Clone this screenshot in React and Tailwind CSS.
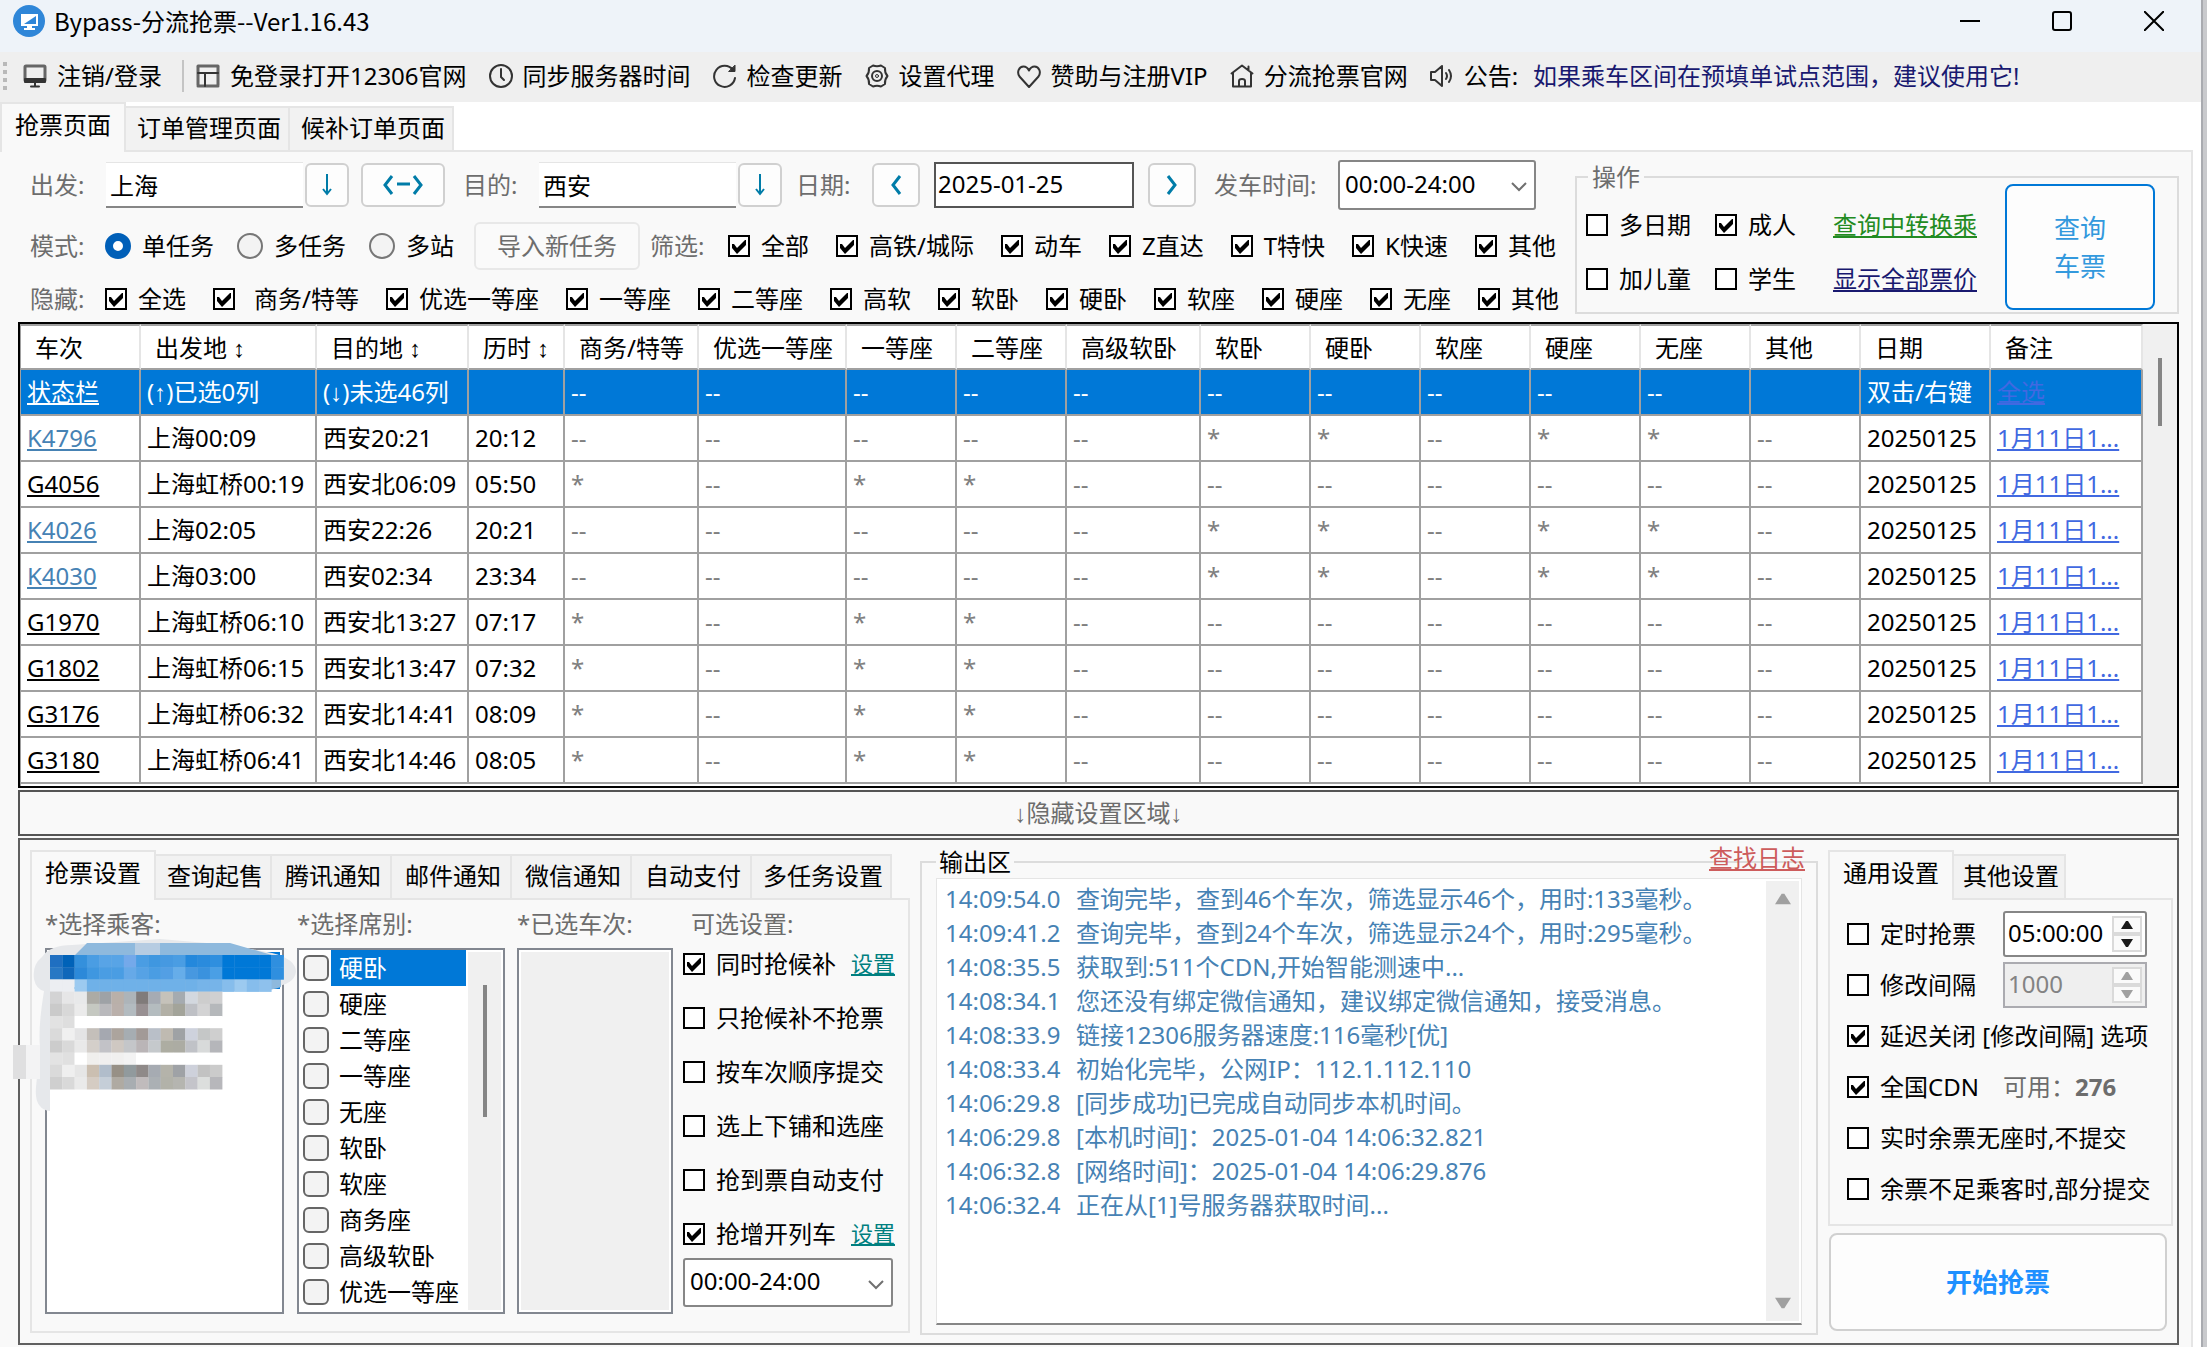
import React, { useState } from "react";

const ticketTabs = [
  { name: "抢票页面", width: "w-[126px]" },
  { name: "订单管理页面", width: "w-[164px]" },
  { name: "候补订单页面", width: "w-[164px]" },
];

const settingTabs = [
  { name: "抢票设置", width: "w-[126px]" },
  { name: "查询起售", width: "w-[116px]" },
  { name: "腾讯通知", width: "w-[120px]" },
  { name: "邮件通知", width: "w-[120px]" },
  { name: "微信通知", width: "w-[120px]" },
  { name: "自动支付", width: "w-[120px]" },
  { name: "多任务设置", width: "w-[140px]" },
];

const commonTabs = [
  { name: "通用设置", width: "w-[126px]" },
  { name: "其他设置", width: "w-[112px]" },
];

const trainFilters = ["全部", "高铁/城际", "动车", "Z直达", "T特快", "K快速", "其他"];
const hideFilters = [
  "全选",
  "商务/特等",
  "优选一等座",
  "一等座",
  "二等座",
  "高软",
  "软卧",
  "硬卧",
  "软座",
  "硬座",
  "无座",
  "其他",
];

const columns = [
  { name: "车次", width: "w-[120px]" },
  { name: "出发地 ↕", width: "w-[176px]" },
  { name: "目的地 ↕", width: "w-[152px]" },
  { name: "历时 ↕", width: "w-[96px]" },
  { name: "商务/特等", width: "w-[134px]" },
  { name: "优选一等座", width: "w-[148px]" },
  { name: "一等座", width: "w-[110px]" },
  { name: "二等座", width: "w-[110px]" },
  { name: "高级软卧", width: "w-[134px]" },
  { name: "软卧", width: "w-[110px]" },
  { name: "硬卧", width: "w-[110px]" },
  { name: "软座", width: "w-[110px]" },
  { name: "硬座", width: "w-[110px]" },
  { name: "无座", width: "w-[110px]" },
  { name: "其他", width: "w-[110px]" },
  { name: "日期", width: "w-[130px]" },
  { name: "备注", width: "w-[152px]" },
];

const kSeats = ["--", "--", "--", "--", "--", "*", "*", "--", "*", "*", "--"];
const gSeats = ["*", "--", "*", "*", "--", "--", "--", "--", "--", "--", "--"];

const trains = [
  ["K4796", "上海00:09", "西安20:21", "20:12"],
  ["G4056", "上海虹桥00:19", "西安北06:09", "05:50"],
  ["K4026", "上海02:05", "西安22:26", "20:21"],
  ["K4030", "上海03:00", "西安02:34", "23:34"],
  ["G1970", "上海虹桥06:10", "西安北13:27", "07:17"],
  ["G1802", "上海虹桥06:15", "西安北13:47", "07:32"],
  ["G3176", "上海虹桥06:32", "西安北14:41", "08:09"],
  ["G3180", "上海虹桥06:41", "西安北14:46", "08:05"],
];

const seats = ["硬卧", "硬座", "二等座", "一等座", "无座", "软卧", "软座", "商务座", "高级软卧", "优选一等座"];

const options = [
  { name: "同时抢候补", checked: true, link: "设置" },
  { name: "只抢候补不抢票" },
  { name: "按车次顺序提交" },
  { name: "选上下铺和选座" },
  { name: "抢到票自动支付" },
  { name: "抢增开列车", checked: true, link: "设置" },
];

const logs = [
  ["14:09:54.0", "查询完毕，查到46个车次，筛选显示46个，用时:133毫秒。"],
  ["14:09:41.2", "查询完毕，查到24个车次，筛选显示24个，用时:295毫秒。"],
  ["14:08:35.5", "获取到:511个CDN,开始智能测速中..."],
  ["14:08:34.1", "您还没有绑定微信通知，建议绑定微信通知，接受消息。"],
  ["14:08:33.9", "链接12306服务器速度:116毫秒[优]"],
  ["14:08:33.4", "初始化完毕，公网IP：112.1.112.110"],
  ["14:06:29.8", "[同步成功]已完成自动同步本机时间。"],
  ["14:06:29.8", "[本机时间]：2025-01-04 14:06:32.821"],
  ["14:06:32.8", "[网络时间]：2025-01-04 14:06:29.876"],
  ["14:06:32.4", "正在从[1]号服务器获取时间..."],
];

/* ---------- icons ---------- */

function ToolIcon({ children }) {
  return (
    <svg className="w-6 h-6 shrink-0" viewBox="0 0 24 24" fill="none" stroke="#333333" strokeWidth="2" strokeLinecap="round" strokeLinejoin="round">
      {children}
    </svg>
  );
}

const tools = [
  {
    name: "免登录打开12306官网",
    icon: (
      <>
        <path d="M2 2h20" stroke="#666666" strokeWidth="3" />
        <path d="M2 3v18M22 3v18M2 22h20" stroke="#666666" strokeWidth="3" />
        <path d="M2 9h20M9 9v13" />
      </>
    ),
  },
  {
    name: "同步服务器时间",
    icon: (
      <>
        <circle cx="12" cy="12" r="11" />
        <path d="M12 5v8l3 3" />
      </>
    ),
  },
  {
    name: "检查更新",
    icon: (
      <>
        <path d="M20 6A10.500 10.500 0 1 0 22 14" />
        <path d="M22 1.500v6h-6z" fill="#333333" strokeWidth="1" />
      </>
    ),
  },
  {
    name: "设置代理",
    icon: (
      <>
        <path d="M8 1.500Q12 3 16 1.500L20 4Q19.500 8.500 22.500 12Q19.500 15.500 20 20L16 22.500Q12 21 8 22.500L4 20Q4.500 15.500 1.500 12Q4.500 8.500 4 4Z" />
        <circle cx="12" cy="12" r="5" />
        <circle cx="12" cy="12" r="1.500" strokeWidth="1" />
      </>
    ),
  },
  {
    name: "赞助与注册VIP",
    icon: <path d="M12 23L2.500 12.500C-.5 8 2 2.500 6.500 2.500C9.500 2.500 11 4.500 12 6.500C13 4.500 14.500 2.500 17.500 2.500C22 2.500 24.500 8 21.500 12.500Z" />,
  },
  {
    name: "分流抢票官网",
    icon: (
      <>
        <path d="M1.500 9.500L12 1.500L22.500 9.500M18.500 2.500v4" />
        <path d="M3 9v13.500h18V9" />
        <path d="M9 22v-5q0-2 3-2t3 2v5" />
      </>
    ),
  },
];

function ArrowDown() {
  return (
    <svg className="w-4 h-6" viewBox="0 0 16 24" fill="none" stroke="#007ca8" strokeWidth="2">
      <path d="M8 1v20M4 16l4 5l4-5" />
    </svg>
  );
}

function Swap() {
  return (
    <svg className="w-10 h-5" viewBox="0 0 40 20" fill="none" stroke="#007ca8" strokeWidth="3">
      <path d="M9 1L2 10l7 9M14 9h13M31 1l7 9l-7 9" />
    </svg>
  );
}

function Angle({ right }) {
  return (
    <svg className="w-3 h-5" viewBox="0 0 12 20" fill="none" stroke="#007ca8" strokeWidth="3">
      <path d={right ? "M2 1l7 9l-7 9" : "M10 1L3 10l7 9"} />
    </svg>
  );
}

function Triangle({ up, color = "#1a1a1a", big }) {
  return (
    <svg className={big ? "w-4 h-3" : "w-3 h-2"} viewBox="0 0 12 8">
      <path d={up ? "M0 8L5 0h2l5 8z" : "M0 0l5 8h2l5-8z"} fill={color} />
    </svg>
  );
}

/* ---------- controls ---------- */

function Check({ label, checked, spaced }) {
  return (
    <label className="flex items-center gap-[11px] whitespace-nowrap">
      <span className="relative flex shrink-0">
        <input type="checkbox" defaultChecked={checked} className="peer appearance-none w-[22px] h-[22px] border-2 border-black bg-white" />
        <svg className="hidden peer-checked:block absolute inset-0 w-[22px] h-[22px] pointer-events-none" viewBox="0 0 22 22">
          <path d="M4 9v4l5 6l9-9V5h-1l-8 8l-3-4z" fill="#000000" />
        </svg>
      </span>
      <span className={spaced ? "pl-2" : ""}>{label}</span>
    </label>
  );
}

function Radio({ label, checked }) {
  return (
    <label className="flex items-center gap-[11px] whitespace-nowrap">
      <input
        type="radio"
        name="mode"
        defaultChecked={checked}
        className="appearance-none w-[26px] h-[26px] rounded-full border-2 border-[#777777] bg-[#f3f3f3] checked:border-[8px] checked:border-[#005fb8] checked:bg-white"
      />
      {label}
    </label>
  );
}

function TimeSelect({ label, className }) {
  return (
    <div className={`relative ${className}`}>
      <select aria-label={label} className="appearance-none w-full h-full pl-[5px] pb-[3px] border-2 border-[#868686] rounded-[3px] bg-white">
        <option>00:00-24:00</option>
      </select>
      <svg className="absolute right-[9px] top-1/2 -mt-1 w-4 h-3 pointer-events-none" viewBox="0 0 16 12" fill="none" stroke="#707070" strokeWidth="2">
        <path d="M1 2l7 7l7-7" />
      </svg>
    </div>
  );
}

function SquareButton({ width, label, children }) {
  return (
    <button type="button" aria-label={label} className={`flex items-center justify-center h-[44px] rounded-[6px] border-2 border-[#d0d0d0] bg-[#fdfdfd] ${width}`}>
      {children}
    </button>
  );
}

function Spinner({ label, value, disabled }) {
  const frame = disabled ? "border-[#ababb0] bg-[#efefef] text-[#838383]" : "border-[#868686] bg-white rounded-[3px]";
  const color = disabled ? "#a0a0a0" : "#1a1a1a";
  const half = "flex flex-1 items-center justify-center border-2 border-[#dadada] bg-[#fafafa]";
  return (
    <div className={`flex w-[144px] h-[46px] border-2 ${frame}`}>
      <input aria-label={label} defaultValue={value} disabled={disabled} className="min-w-0 flex-1 pl-[3px] pb-[2px] bg-transparent" />
      <div className="flex flex-col w-[30px] my-[3px] mr-[3px]">
        <button type="button" aria-label="增加" disabled={disabled} className={half}>
          <Triangle up color={color} />
        </button>
        <button type="button" aria-label="减少" disabled={disabled} className={half}>
          <Triangle color={color} />
        </button>
      </div>
    </div>
  );
}

function Tabs({ items, className = "" }) {
  const [active, setActive] = useState(0);
  return (
    <div role="tablist" className={`flex items-end h-[50px] border-b-2 border-[#e5e5e5] ${className}`}>
      {items.map((item, i) => (
        <button
          key={item.name}
          type="button"
          role="tab"
          aria-selected={i === active}
          onClick={() => setActive(i)}
          className={`${item.width} whitespace-nowrap border-[#e5e5e5] ${
            i === active ? "h-[50px] -mb-[2px] pb-[7px] border-t-2 border-x-2 bg-[#f9f9f9]" : "h-[44px] pl-[4px] pb-[2px] border-t-2 border-r-2 bg-[#f2f2f2]"
          }`}
        >
          {item.name}
        </button>
      ))}
    </div>
  );
}

/* ---------- censored passenger names ---------- */

const mosaic = [
  ["#1f6fc1", "#0062b8", "#3490dc", "#4a9de3", "#58a4e6", "#58a4e6", "#74a9ea", "#4a9de3", "#3f97e0", "#4699e1", "#4a9de3", "#2488dc", "#2a8bdd", "#2f8fdf", "#0078d7", "#0078d7", "#0078d7", "#0078d7", "#2f8fdf"],
  ["#2878c4", "#0f67ba", "#2c89d9", "#3f97e0", "#4a9de3", "#4a9de3", "#66a9e8", "#56a2e5", "#4a9de3", "#539fe4", "#66ade9", "#4798e0", "#3a92de", "#4a9fe5", "#0078d7", "#0078d7", "#0078d7", "#0078d7", "#2f8fdf"],
  ["#eceef2", "#eceef2", "#9ccaf0", "#6fb1e8", "#6fb1e8", "#6fb1e8", "#6fb1e8", "#6fb1e8", "#6fb1e8", "#6fb1e8", "#6fb1e8", "#6fb1e8", "#76b4e9", "#76b4e9", "#86bdec", "#9ccaf0", "#86bdec", "#8ec1ed"],
  ["#d3d3d4", "#e6e6e7", "#e8e9ea", "#acaba5", "#9ea2a6", "#b9b0a9", "#adb4b9", "#807b7a", "#a6abb3", "#c5c2ba", "#a5abb0", "#d3d8df", "#cdcdcd", "#d0d0d1"],
  ["#cacaca", "#d8d8d8", "#ebebeb", "#c5c8c1", "#b9b9bc", "#bab0ab", "#b3bbc0", "#989092", "#b4bcbf", "#b2b0a6", "#a3a49a", "#bec0c5", "#d3d3d4", "#b5b8bb"],
  ["#e2e2e2", "#dedede", "#ffffff", "#ffffff", "#ffffff", "#ffffff", "#ffffff", "#ffffff", "#ffffff", "#ffffff", "#ffffff", "#ffffff", "#ffffff", "#ffffff"],
  ["#dadada", "#f0f0f0", "#e4e4e5", "#c4bfba", "#a5a8b0", "#aca49d", "#a6adb2", "#a29a97", "#b9bfc8", "#bfbab1", "#9fa2a5", "#ced2dd", "#c5c7c7", "#cfcfcf"],
  ["#cccccc", "#d9d9d9", "#e9e9e9", "#d4cfca", "#c2c2c7", "#cfc8c2", "#c4c6c9", "#bab5b7", "#c5c9cc", "#adada2", "#acaca3", "#c0c2c7", "#d8dada", "#b5b6ba"],
  ["#e3e3e3", "#e0e0e0", "#ffffff", "#f0efed", "#f0efef", "#f1f0ef", "#f3f3f3", "#ffffff", "#ffffff", "#ffffff", "#ffffff", "#ffffff", "#ffffff", "#ffffff"],
  ["#dadada", "#efefef", "#e6e6e6", "#cbbfb1", "#b1bdcb", "#979086", "#919a9d", "#8f8a89", "#a6abb2", "#b4b3aa", "#9fa2a6", "#ced1db", "#c2c2c2", "#cbcbcb"],
  ["#cfcfcf", "#d9d9d9", "#eaeaea", "#d5ccc3", "#c5ced8", "#afaaa2", "#a8adb1", "#c0bbbc", "#abb0b4", "#b2b2a9", "#b5b5b0", "#c4c4ca", "#dcdedd", "#b7b7bb"],
];

function Mosaic() {
  return (
    <svg className="absolute -left-[37px] -top-[13px] w-[290px] h-[180px] pointer-events-none" viewBox="0 0 290 180">
      <path d="M24 42Q22 28 32 20Q40 8 62 8L150 2L220 8L262 16Q286 22 286 35Q284 48 262 50H60L40 60V174Q24 172 26 150L30 110Q28 90 34 54Q26 52 24 42Z" fill="#e6e8eb" />
      <rect x="3" y="108" width="13" height="34" fill="#dfdfe0" />
      <rect x="16" y="108" width="14" height="34" fill="#f3f3f4" />
      <path d="M65 18L77 6H220L262 18H271V50Q262 54 240 54H65Z" fill="#8eb9dd" />
      <rect x="125" y="6" width="25" height="12" fill="#b6cce2" />
      {mosaic.map((row, y) => row.map((c, x) => <rect key={`${x}-${y}`} x={40 + x * 12.3} y={18 + y * 12.2} width="12.5" height="12.5" fill={c} />))}
    </svg>
  );
}

/* ---------- page parts ---------- */

function TitleBar() {
  return (
    <header className="flex items-center h-[52px] pb-[10px] pl-[13px] bg-[#eef3f9]">
      <svg className="w-8 h-8" viewBox="0 0 32 32">
        <circle cx="16" cy="16" r="16" fill="#2f86d8" />
        <path d="M8 9h17v12H8z" fill="#ffffff" />
        <path d="M23 11L11 19h12z" fill="#2f86d8" />
        <path d="M14 21h5v2h3v2H11v-2h3z" fill="#ffffff" />
      </svg>
      <h1 className="flex-1 pl-[9px] font-normal font-['Noto_Sans_CJK_SC',sans-serif]">Bypass-分流抢票--Ver1.16.43</h1>
      <div className="flex gap-[72px] pr-[37px]">
        <button type="button" aria-label="最小化">
          <svg className="w-5 h-5" viewBox="0 0 20 20" stroke="#000000" strokeWidth="2"><path d="M0 10h20" /></svg>
        </button>
        <button type="button" aria-label="最大化">
          <svg className="w-5 h-5" viewBox="0 0 20 20" fill="none" stroke="#000000" strokeWidth="2"><rect x="1" y="1" width="18" height="18" rx="2" /></svg>
        </button>
        <button type="button" aria-label="关闭">
          <svg className="w-5 h-5" viewBox="0 0 20 20" stroke="#000000" strokeWidth="2"><path d="M0 0l20 20M20 0L0 20" /></svg>
        </button>
      </div>
    </header>
  );
}

function Toolbar() {
  const item = "flex items-center gap-[10px]";
  return (
    <nav className="flex items-center gap-[22px] h-[50px] pb-[3px] bg-[#efefef] whitespace-nowrap">
      <div className="flex items-center">
        <svg className="w-1 h-7 ml-[3px] mr-4" viewBox="0 0 4 28" fill="#b9b9b9">
          <path d="M0 0h4v4H0zM0 8h4v4H0zM0 16h4v4H0zM0 24h4v4H0z" />
        </svg>
        <button type="button" className={item}>
          <ToolIcon>
            <rect x="2" y="2" width="20" height="15" rx="1" stroke="#666666" strokeWidth="3" />
            <path d="M2 15h20v3H2z" fill="#333333" stroke="#333333" />
            <path d="M12 18v4M8 22.500h8" />
          </ToolIcon>
          注销/登录
        </button>
        <span className="w-[2px] h-8 ml-5 -mr-[10px] bg-[#c4c4c4]" />
      </div>
      {tools.map((t) => (
        <button key={t.name} type="button" className={item}>
          <ToolIcon>{t.icon}</ToolIcon>
          {t.name}
        </button>
      ))}
      <div className={item}>
        <ToolIcon>
          <path d="M1 8h4l7-6v20l-7-6H1zM16 9q2 3 0 6M19 6q4 6 0 12" />
        </ToolIcon>
        公告:
        <span className="pl-[5px] text-[#191970]">如果乘车区间在预填单试点范围，建议使用它!</span>
      </div>
    </nav>
  );
}

function Filters() {
  const label = "text-[#6d6d6d] whitespace-nowrap";
  const box = "h-[46px] pl-1 bg-white border-t border-[#e5e5e5] border-b-2 border-b-[#868686]";
  return (
    <section className="flex justify-between pl-[12px] whitespace-nowrap">
      <div className="flex flex-col pt-2">
        <div className="flex items-center h-[50px]">
          <label htmlFor="from" className={`w-[76px] ${label}`}>出发:</label>
          <input id="from" defaultValue="上海" className={`w-[197px] mr-[2px] ${box}`} />
          <SquareButton width="w-[44px] mr-3" label="选择出发站"><ArrowDown /></SquareButton>
          <SquareButton width="w-[84px] mr-[18px]" label="互换"><Swap /></SquareButton>
          <label htmlFor="to" className={`w-[76px] ${label}`}>目的:</label>
          <input id="to" defaultValue="西安" className={`w-[197px] mr-[2px] ${box}`} />
          <SquareButton width="w-[44px] mr-[14px]" label="选择目的站"><ArrowDown /></SquareButton>
          <label htmlFor="date" className={`w-[76px] ${label}`}>日期:</label>
          <SquareButton width="w-[48px] mr-[14px]" label="前一天"><Angle /></SquareButton>
          <input id="date" defaultValue="2025-01-25" className="w-[200px] h-[46px] mr-[14px] pl-[2px] pb-[3px] border-2 border-[#555555] bg-white" />
          <SquareButton width="w-[48px] mr-[18px]" label="后一天"><Angle right /></SquareButton>
          <span className={`w-[124px] ${label}`}>发车时间:</span>
          <TimeSelect label="发车时间" className="w-[198px] h-[50px]" />
        </div>
        <div className="flex items-center h-[48px] mt-3">
          <span className={`w-[75px] ${label}`}>模式:</span>
          <div className="flex gap-[23px]">
            <Radio label="单任务" checked />
            <Radio label="多任务" />
            <Radio label="多站" />
          </div>
          <button type="button" className="w-[166px] h-[48px] ml-5 mr-[10px] rounded-[6px] border-2 border-[#e8e8e8] bg-[#fafafa] text-[#6d6d6d]">
            导入新任务
          </button>
          <span className={`w-[78px] ${label}`}>筛选:</span>
          <div className="flex gap-[27px]">
            {trainFilters.map((name) => (
              <Check key={name} label={name} checked />
            ))}
          </div>
        </div>
        <div className="flex items-center h-[34px] mt-3">
          <span className={`w-[75px] ${label}`}>隐藏:</span>
          <div className="flex gap-[27px]">
            {hideFilters.map((name) => (
              <Check key={name} label={name} checked spaced={name === "商务/特等"} />
            ))}
          </div>
        </div>
      </div>

      <fieldset className="w-[604px] h-[144px] mt-[18px] border-2 border-[#dcdcdc]">
        <legend className="ml-[11px] px-1 h-[14px] leading-[14px] text-[#6d6d6d]">操作</legend>
        <div className="flex pl-[9px]">
          <div className="grid grid-cols-[129px_118px_172px] gap-y-[22px] pt-[25px] content-start">
            <Check label="多日期" />
            <Check label="成人" checked />
            <a href="#transfer" className="text-[#228b22] underline">查询中转换乘</a>
            <Check label="加儿童" />
            <Check label="学生" />
            <a href="#price" className="text-[#191970] underline">显示全部票价</a>
          </div>
          <button type="button" className="w-[150px] h-[126px] rounded-[8px] border-2 border-[#0078d7] bg-[#fdfdfd] text-[26px] leading-[38px] text-[#3399dd]">
            查询
            <br />
            车票
          </button>
        </div>
      </fieldset>
    </section>
  );
}

function TrainTable() {
  const cell = "h-[46px] pl-[6px] border-r-2 border-b-2 border-[#a0a0a0]";
  return (
    <div className="flex h-[466px] mt-[6px] border-2 border-black bg-[#f0f0f0]">
      <div className="flex-1 overflow-hidden border-l border-[#a0a0a0] bg-white">
        <table className="w-full table-fixed border-separate border-spacing-0 whitespace-nowrap text-left">
          <thead>
            <tr>
              {columns.map((c, i) => (
                <th key={i} className={`${c.width} h-[46px] pt-[2px] pl-[14px] font-normal border-t-2 border-r-2 border-b-2 border-[#a0a0a0] border-r-[#e5e5e5]`}>
                  {c.name}
                </th>
              ))}
            </tr>
          </thead>
          <tbody>
            <tr className="bg-[#0078d7] text-white">
              <td className={cell}><a href="#status" className="underline">状态栏</a></td>
              <td className={cell}>(↑)已选0列</td>
              <td className={cell}>(↓)未选46列</td>
              <td className={cell} />
              {kSeats.map((_, i) => (
                <td key={i} className={cell}>{i < 10 ? "--" : ""}</td>
              ))}
              <td className={cell}>双击/右键</td>
              <td className={cell}><a href="#all" className="underline text-[#4169e1]">全选</a></td>
            </tr>
            {trains.map(([no, from, to, duration]) => {
              const slow = no.startsWith("K");
              return (
                <tr key={no}>
                  <td className={cell}>
                    <a href={`#${no}`} className={slow ? "underline text-[#4682b4]" : "underline"}>{no}</a>
                  </td>
                  <td className={cell}>{from}</td>
                  <td className={cell}>{to}</td>
                  <td className={cell}>{duration}</td>
                  {(slow ? kSeats : gSeats).map((s, i) => (
                    <td key={i} className={`${cell} text-[#808080]`}>{s}</td>
                  ))}
                  <td className={cell}>20250125</td>
                  <td className={cell}><a href={`#sale-${no}`} className="underline text-[#4169e1]">1月11日1...</a></td>
                </tr>
              );
            })}
          </tbody>
        </table>
      </div>
      <div className="w-[34px] flex justify-center pt-[34px]">
        <span className="w-1 h-[68px] bg-[#858585]" />
      </div>
    </div>
  );
}

function GrabSettings() {
  const title = "text-[#6d6d6d]";
  const list = "h-[366px] border-2 border-[#828790] bg-white";
  return (
    <section className="w-[880px] whitespace-nowrap">
      <Tabs items={settingTabs} />
      <div className="flex h-[433px] pt-2 pl-[13px] border-2 border-t-0 border-[#e5e5e5]">
        <div className="flex flex-col gap-2 w-[239px] mr-[13px]">
          <span className={title}>*选择乘客:</span>
          <div className={`relative ${list}`}>
            <div className="h-[37px] m-[2px] bg-[#0078d7]" />
            <Mosaic />
          </div>
        </div>
        <div className="flex flex-col gap-2 w-[208px] mr-3">
          <span className={title}>*选择席别:</span>
          <div className={`flex px-[2px] ${list}`}>
            <div className="flex-1">
              {seats.map((s, i) => (
                <label key={s} className="flex items-center h-[36px] pl-[2px]">
                  <input type="checkbox" className="appearance-none w-[26px] h-[26px] mr-[2px] rounded-[6px] border-2 border-[#666666] bg-[#f3f3f3]" />
                  <span className={`flex-1 h-[36px] pl-[8px] leading-[36px] ${i === 0 ? "bg-[#0078d7] text-white" : ""}`}>{s}</span>
                </label>
              ))}
            </div>
            <div className="w-[33px] my-[2px] ml-[2px] pt-[33px] flex justify-center bg-[#f0f0f0]">
              <span className="w-1 h-[132px] bg-[#858585]" />
            </div>
          </div>
        </div>
        <div className="flex flex-col gap-2 w-[156px] mr-[10px]">
          <span className={title}>*已选车次:</span>
          <div className={`p-[2px] ${list}`}>
            <div className="h-full bg-[#f0f0f0]" />
          </div>
        </div>
        <div className="flex flex-col gap-2 w-[212px]">
          <span className={`pl-2 ${title}`}>可选设置:</span>
          <div className="flex flex-col gap-[22px]">
            {options.map((o) => (
              <div key={o.name} className="flex items-center justify-between">
                <Check label={o.name} checked={o.checked} />
                {o.link && <a href="#option" className="text-[22px] text-[#008080] underline">{o.link}</a>}
              </div>
            ))}
          </div>
          <TimeSelect label="增开列车时间" className="w-[210px] h-[49px]" />
        </div>
      </div>
    </section>
  );
}

function Output() {
  return (
    <section className="relative flex-1 mt-[5px]">
      <fieldset className="h-[480px] pl-[14px] pr-[14px] pt-[9px] border-2 border-[#dcdcdc]">
        <legend className="px-[3px] h-[14px] leading-[14px]">输出区</legend>
        <div className="flex h-[447px] bg-white border border-[#e5e5e5] border-b-2 border-b-[#868686]">
          <div role="log" className="flex-1 pt-[3px] pl-2 leading-[34px] text-[#4682b4] whitespace-nowrap">
            {logs.map(([time, text], i) => (
              <p key={i} className="flex">
                <span className="w-[131px]">{time}</span>
                <span>{text}</span>
              </p>
            ))}
          </div>
          <div className="flex flex-col items-center justify-between w-[33px] my-[2px] mr-[2px] py-[12px] bg-[#f0f0f0]">
            <Triangle up big color="#a0a0a0" />
            <Triangle big color="#a0a0a0" />
          </div>
        </div>
      </fieldset>
      <a href="#log" className="absolute right-[13px] -top-[13px] text-[#cd5c5c] underline">查找日志</a>
    </section>
  );
}

function CommonSettings() {
  const row = "flex items-center h-[51px]";
  return (
    <section className="w-[345px] whitespace-nowrap">
      <Tabs items={commonTabs} />
      <div className="h-[326px] pt-2 pl-[17px] pr-6 border-2 border-t-0 border-[#e5e5e5]">
        <div className={`${row} justify-between`}>
          <Check label="定时抢票" />
          <Spinner label="定时抢票时间" value="05:00:00" />
        </div>
        <div className={`${row} justify-between`}>
          <Check label="修改间隔" />
          <Spinner label="间隔毫秒" value="1000" disabled />
        </div>
        <div className={row}><Check label="延迟关闭 [修改间隔] 选项" checked /></div>
        <div className={row}>
          <Check label="全国CDN" checked />
          <span className="pl-6 text-[#6d6d6d]">可用：<b>276</b></span>
        </div>
        <div className={row}><Check label="实时余票无座时,不提交" /></div>
        <div className={row}><Check label="余票不足乘客时,部分提交" /></div>
      </div>
      <button type="button" className="w-[338px] h-[98px] mt-[7px] ml-[1px] rounded-[8px] border-2 border-[#d0d0d0] bg-[#fdfdfd] text-[26px] font-bold text-[#1e90ff]">
        开始抢票
      </button>
    </section>
  );
}

export default function App() {
  return (
    <div
      lang="zh-CN"
      className="flex min-h-screen bg-[#c9cacd] text-2xl text-black font-['Noto_Sans','Liberation_Sans','Noto_Sans_CJK_SC',sans-serif]"
    >
      <div className="flex flex-col flex-1 min-w-0 mr-[4px] border-r-2 border-[#a9abb0] bg-white">
        <TitleBar />
        <Toolbar />
        <Tabs items={ticketTabs} className="mr-2" />
        <main className="flex-1 mr-2 pl-[18px] pr-3 border-r-2 border-[#e5e5e5] bg-[#f9f9f9]">
          <Filters />
          <TrainTable />
          <button type="button" className="block w-full h-[46px] mt-[2px] border-2 border-[#555555] text-[#6d6d6d]">
            ↓隐藏设置区域↓
          </button>
          <div className="flex mt-[2px] pt-[10px] pb-2 pl-[10px] pr-1 gap-[10px] border-2 border-[#606060]">
            <GrabSettings />
            <Output />
            <CommonSettings />
          </div>
        </main>
      </div>
    </div>
  );
}
